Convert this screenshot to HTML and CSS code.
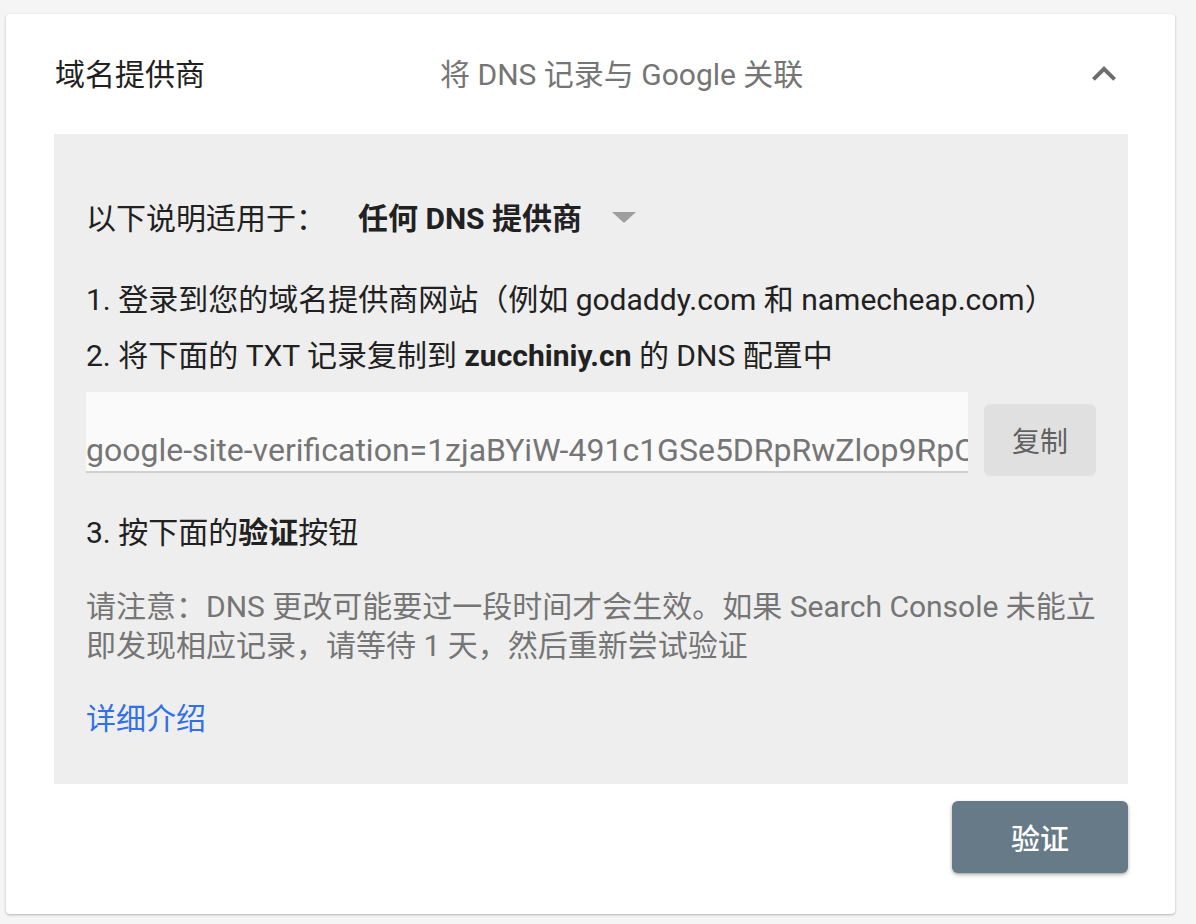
FILE: index.html
```html
<!DOCTYPE html>
<html lang="zh-CN">
<head>
<meta charset="utf-8">
<title>域名提供商</title>
<link rel="stylesheet" href="styles.css">
</head>
<body>
<div class="card">
  <div class="card-header">
    <div class="title">域名提供商</div>
    <div class="subtitle">将 DNS 记录与 Google 关联</div>
    <button class="collapse" aria-label="收起">
      <svg viewBox="0 0 24 24" width="48" height="48"><path d="M7.41 15.41L12 10.83l4.59 4.58L18 14l-6-6-6 6z" fill="#6d6d6d"/></svg>
    </button>
  </div>
  <div class="panel">
    <div class="select-row">
      <span class="select-label">以下说明适用于：</span>
      <span class="select-value">任何 DNS 提供商</span>
      <span class="select-arrow"></span>
    </div>
    <p class="step step-1">1. 登录到您的域名提供商网站（例如 godaddy.com 和 namecheap.com）</p>
    <p class="step step-2">2. 将下面的 TXT 记录复制到 <b>zucchiniy.cn</b> 的 DNS 配置中</p>
    <div class="record-row">
      <div class="record-field"><div class="record-text">google-site-verification=1zjaBYiW-491c1GSe5DRpRwZlop9RpC4mHtsNzlWmlNk</div></div>
      <button class="copy-btn">复制</button>
    </div>
    <p class="step step-3">3. 按下面的<b>验证</b>按钮</p>
    <p class="note">请注意：DNS 更改可能要过一段时间才会生效。如果 Search Console 未能立即发现相应记录，请等待 1 天，然后重新尝试验证</p>
    <a class="more-link" href="#">详细介绍</a>
  </div>
  <div class="card-actions">
    <button class="verify-btn">验证</button>
  </div>
</div>
</body>
</html>
```

FILE: styles.css
```css
* { box-sizing: border-box; }

html, body {
  margin: 0;
  padding: 0;
}

body {
  background: #f5f5f5;
  padding: 14px 21px 11px 6px;
  font-family: Roboto, "Noto Sans CJK SC", sans-serif;
  color: #212121;
}

.card {
  background: #ffffff;
  border-radius: 4px;
  box-shadow: 0 1px 3px rgba(0,0,0,0.18), 0 1px 2px rgba(0,0,0,0.10);
  padding: 0 47px 41px 48px;
}

.card-header {
  height: 120px;
  display: flex;
  align-items: center;
}

.title {
  width: 386px;
  padding-left: 1px;
  padding-bottom: 5px;
  font-size: 30px;
  color: #212121;
}

.subtitle {
  flex: 1;
  padding-bottom: 5px;
  font-size: 30px;
  color: #757575;
}

.collapse {
  width: 48px;
  height: 48px;
  padding: 0;
  border: 0;
  background: none;
  display: flex;
}

.panel {
  background: #eeeeee;
  padding: 62px 32px 45px 32px;
}

.select-row {
  display: flex;
  align-items: center;
  height: 40px;
  font-size: 30px;
}

.select-label {
  width: 272px;
}

.select-value {
  font-weight: 700;
}

.select-arrow {
  margin-left: 30px;
  margin-top: 2px;
  width: 0;
  height: 0;
  border-left: 12px solid transparent;
  border-right: 12px solid transparent;
  border-top: 11px solid #9e9e9e;
}

.step {
  margin: 0;
  font-size: 30px;
  line-height: 40px;
}

.step-1 { margin-top: 44px; }
.step-2 { margin-top: 16px; }
.step-3 { margin-top: 37px; }

.step b { font-weight: 700; }

.record-row {
  margin-top: 16px;
  display: flex;
  align-items: flex-start;
  gap: 16px;
}

.record-field {
  width: 882px;
  height: 81px;
  background: #fafafa;
  border-bottom: 2px solid #d0d0d0;
  padding-top: 38px;
}

.record-text {
  width: 100%;
  overflow: hidden;
  white-space: nowrap;
  font-size: 32px;
  line-height: 40px;
  color: #757575;
}

.copy-btn {
  margin-top: 12px;
  width: 112px;
  height: 72px;
  border: 0;
  border-radius: 6px;
  background: #e0e0e0;
  color: #616161;
  font-family: Roboto, "Noto Sans CJK SC", sans-serif;
  font-size: 28px;
  padding: 0;
}

.note {
  margin: 34px -12px 0 0;
  font-size: 30px;
  line-height: 39px;
  color: #757575;
}

.more-link {
  display: block;
  margin-top: 34px;
  font-size: 30px;
  line-height: 40px;
  color: #3170e6;
  text-decoration: none;
}

.card-actions {
  display: flex;
  justify-content: flex-end;
  padding-top: 17px;
}

.verify-btn {
  width: 176px;
  height: 72px;
  border: 0;
  border-radius: 6px;
  background: #667b87;
  color: #ffffff;
  font-family: Roboto, "Noto Sans CJK SC", sans-serif;
  font-size: 29px;
  font-weight: 500;
  box-shadow: 0 2px 4px rgba(0,0,0,0.25), 0 1px 2px rgba(0,0,0,0.15);
}
```
